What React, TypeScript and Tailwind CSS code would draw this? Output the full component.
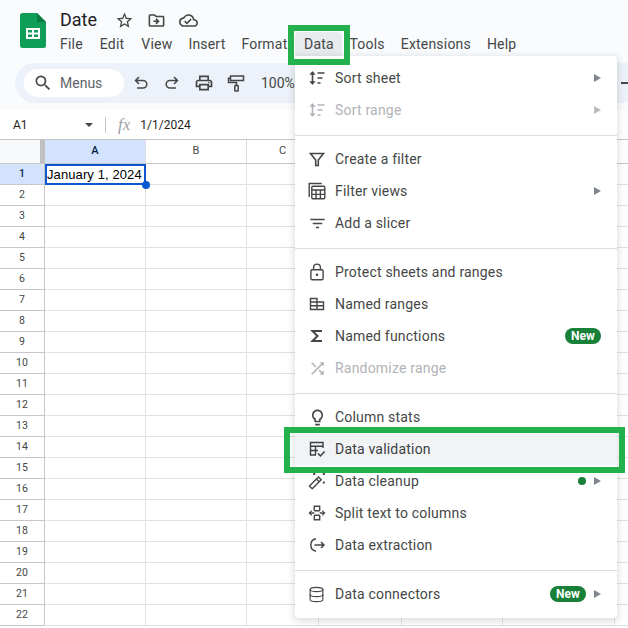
import type { ReactNode } from "react";
import { Database } from "lucide-react";
import {
  MdFilterList,
  MdOutlineCloudDone,
  MdOutlineDriveFileMove,
  MdOutlineLightbulb,
  MdOutlinePrint,
  MdSearch,
  MdShuffle,
  MdStarBorder,
} from "react-icons/md";

const menuBar = [
  { name: "File", gap: "mr-[17px]" },
  { name: "Edit", gap: "mr-[17px]" },
  { name: "View", gap: "mr-[16px]" },
  { name: "Insert", gap: "mr-[16px]" },
  { name: "Format", gap: "mr-[8px]" },
];
// D onward sit behind the open menu, so their letters never show
const columns = [
  { id: "a", name: "A", width: "w-[101px]" },
  { id: "b", name: "B", width: "w-[101px]" },
  { id: "c", name: "C", width: "w-[72px]" },
  { id: "d", name: "", width: "w-[83px]" },
  { id: "e", name: "", width: "w-[101px]" },
  { id: "f", name: "", width: "w-[112px]" },
  { id: "g", name: "", width: "w-[60px]" },
];
const rows = Array.from({ length: 22 }, (_, i) => i + 1);

const SortIcon = () => (
  <svg viewBox="0 0 18 18" className="h-[18px] w-[18px]" fill="none" stroke="currentColor">
    <path d="M4.5 3v12" strokeWidth="1.6" />
    <path d="M1.8 5.5 4.5 2.4l2.7 3.1zM1.8 12.5l2.7 3.1 2.7-3.1z" fill="currentColor" strokeWidth="0.5" />
    <path d="M9.5 4h7M9.5 9h5M9.5 14h3" strokeWidth="1.6" />
  </svg>
);
const FilterIcon = () => (
  <svg viewBox="0 0 18 18" className="h-[18px] w-[18px]" fill="none" stroke="currentColor" strokeWidth="1.6">
    <path d="M2.5 3.5h13L10.3 10v5.5H7.7V10z" />
  </svg>
);
const FilterViewsIcon = () => (
  <svg viewBox="0 0 18 18" className="h-[18px] w-[18px]" fill="none" stroke="currentColor" strokeWidth="1.4">
    <path d="M1.2 15V1.5h12.5" />
    <rect x="3.8" y="4.2" width="13" height="12.6" rx="1" />
    <path d="M3.8 8h13M3.8 12.4h13M8 8v8.8M12.4 8v8.8" />
  </svg>
);
const LockIcon = () => (
  <svg viewBox="0 0 18 18" className="h-[18px] w-[18px]" fill="none" stroke="currentColor" strokeWidth="1.4">
    <rect x="2.900" y="6.700" width="12.200" height="10" rx="1.200" />
    <path d="M5.600 6.700V4.500a3.400 3.400 0 0 1 6.800 0v2.200" />
    <circle cx="9" cy="11.700" r="1.300" fill="currentColor" stroke="none" />
  </svg>
);
const NamedRangesIcon = () => (
  <svg viewBox="0 0 18 18" className="h-[18px] w-[18px]" fill="none" stroke="currentColor" strokeWidth="1.4">
    <path d="M2.500 3.500h6.500v3.500h6.500v7.500h-13zM2.500 7h13M2.500 10.700h13M9 3.500v11" />
  </svg>
);
const SigmaIcon = () => (
  <svg viewBox="0 0 18 18" className="h-[18px] w-[18px]" fill="none" stroke="currentColor" strokeWidth="2">
    <path d="M14 4H4.500L9.500 9l-5 5H14" />
  </svg>
);
const ValidationIcon = () => (
  <svg viewBox="0 0 18 18" className="h-[18px] w-[18px]" fill="none" stroke="currentColor" strokeWidth="1.4">
    <path d="M8 15H2.500V2.500h12.500V8M2.500 6.300H15M2.500 10.500H10M7.500 6.300V15" />
    <path d="m10 13.500 2.400 2.400 4.200-4.400" strokeWidth="1.500" />
  </svg>
);
const CleanupIcon = () => (
  <svg viewBox="0 0 18 18" className="h-[18px] w-[18px]" fill="none" stroke="currentColor" strokeWidth="1.4">
    <path d="m1.500 14 9-9 2.700 2.700-9 9z" />
    <path d="m8.400 7.100 2.700 2.700" />
    <path d="M5.200 1h2v2h-2zM14.800 1h2v2h-2zM14.800 9.500h2v2h-2z" fill="currentColor" stroke="none" />
  </svg>
);
const SplitIcon = () => (
  <svg viewBox="0 0 18 18" className="h-[18px] w-[18px]" fill="none" stroke="currentColor" strokeWidth="1.4">
    <path d="M6.300 6.700V2.200h5.400v4.500M6.300 11.300v4.500h5.400v-4.500M6.300 6.700h5.400M6.300 11.300h5.400M4 9h2.300M11.700 9H14" />
    <path d="M.5 9l3.200-3v6zM17.500 9l-3.200-3v6z" fill="currentColor" stroke="none" />
  </svg>
);
const ExtractIcon = () => (
  <svg viewBox="0 0 18 18" className="h-[18px] w-[18px]" fill="none" stroke="currentColor" strokeWidth="1.5">
    <path d="M8 2.800a6.300 6.300 0 0 0 0 12.400" />
    <path d="M6.500 9h9.500M13 6l3 3-3 3" />
  </svg>
);
const UndoIcon = () => (
  <svg viewBox="0 0 18 18" className="h-[18px] w-[18px]" fill="none" stroke="currentColor" strokeWidth="1.5">
    <path d="M7 3 3.500 6.500 7 10M3.500 6.500H11a3.800 3.800 0 0 1 0 7.600H5" />
  </svg>
);
const RedoIcon = () => (
  <svg viewBox="0 0 18 18" className="h-[18px] w-[18px]" fill="none" stroke="currentColor" strokeWidth="1.5">
    <path d="m11 3 3.500 3.500L11 10M14.500 6.500H7a3.800 3.800 0 0 0 0 7.600h6" />
  </svg>
);
const RollerIcon = () => (
  <svg viewBox="0 0 18 18" className="h-[18px] w-[18px]" fill="none" stroke="currentColor" strokeWidth="1.5">
    <path d="M3.500 2h13v4.500h-13zM3.500 4.200H1.500v4.300H9.500v3" />
    <rect x="7.800" y="11.500" width="3.400" height="5.500" rx="0.500" />
  </svg>
);

type Item = {
  label: string;
  icon: ReactNode;
  disabled?: boolean;
  arrow?: boolean;
  isNew?: boolean;
  dot?: boolean;
  active?: boolean;
};

const sections: Item[][] = [
  [
    { label: "Sort sheet", icon: <SortIcon />, arrow: true },
    { label: "Sort range", icon: <SortIcon />, arrow: true, disabled: true },
  ],
  [
    { label: "Create a filter", icon: <FilterIcon /> },
    { label: "Filter views", icon: <FilterViewsIcon />, arrow: true },
    { label: "Add a slicer", icon: <MdFilterList className="h-[19px] w-[19px]" /> },
  ],
  [
    { label: "Protect sheets and ranges", icon: <LockIcon /> },
    { label: "Named ranges", icon: <NamedRangesIcon /> },
    { label: "Named functions", icon: <SigmaIcon />, isNew: true },
    { label: "Randomize range", icon: <MdShuffle className="h-[19px] w-[19px]" />, disabled: true },
  ],
  [
    { label: "Column stats", icon: <MdOutlineLightbulb className="h-[19px] w-[19px]" /> },
    { label: "Data validation", icon: <ValidationIcon />, active: true },
    { label: "Data cleanup", icon: <CleanupIcon />, dot: true, arrow: true },
    { label: "Split text to columns", icon: <SplitIcon /> },
    { label: "Data extraction", icon: <ExtractIcon /> },
  ],
  [{ label: "Data connectors", icon: <Database className="h-[17px] w-[17px]" strokeWidth={1.6} />, isNew: true, arrow: true }],
];

const NewBadge = () => (
  <span className="flex h-[16px] w-[36px] items-center justify-center rounded-full bg-[#188038] text-[12px] font-bold text-white">
    New
  </span>
);

const MenuRow = ({ item }: { item: Item }) => (
  <div
    className={`flex h-[32px] items-center pl-[13px] pr-[16px] ${item.active ? "bg-[#f1f3f4]" : ""} ${
      item.disabled ? "text-[#b1b4b8]" : item.active ? "text-[#3c4043]" : "text-[#444746]"
    }`}
  >
    <span className="flex w-[27px] shrink-0 items-center justify-start">{item.icon}</span>
    <span className="tracking-[0.2px]">{item.label}</span>
    <span className="ml-auto flex items-center gap-[8px]">
      {item.isNew && <NewBadge />}
      {item.dot && <span className="h-[8px] w-[8px] rounded-full bg-[#188038]" />}
      {item.arrow && (
        <span
          className={`h-0 w-0 border-y-[4px] border-l-[7px] border-y-transparent ${
            item.disabled ? "border-l-[#b9bcbf]" : "border-l-[#80868b]"
          }`}
        />
      )}
    </span>
  </div>
);

const SheetGrid = () => (
  <div className="text-[#444746]">
    <div className="flex h-[25px] border-y border-[#c7c7c7]">
      <div className="w-[45px] shrink-0 border-r-[5px] border-[#c0c0c0] bg-[#f8f9fa]" />
      {columns.map((col, i) => (
        <div
          key={col.id}
          className={`${col.width} flex shrink-0 items-center justify-center border-r border-[#dadce0] text-[11px] ${
            i === 0 ? "bg-[#d3e3fd] font-medium text-[#041e49]" : ""
          }`}
        >
          {col.name}
        </div>
      ))}
    </div>
    {rows.map((row) => (
      <div key={row} className="flex h-[21px]">
        <div
          className={`flex w-[45px] shrink-0 items-center justify-center border-r border-b border-[#c7c7c7] text-[10.5px] ${
            row === 1 ? "bg-[#d3e3fd] font-medium text-[#041e49]" : ""
          }`}
        >
          {row}
        </div>
        {columns.map((col) => (
          <div key={col.id} className={`${col.width} shrink-0 border-r border-b border-[#e1e1e1]`} />
        ))}
      </div>
    ))}
  </div>
);

export default function App() {
  return (
    <div className="relative h-[628px] w-[628px] overflow-hidden bg-white font-['Roboto',sans-serif] text-[14px] text-[#444746]">
      {/* Title and menu bar */}
      <div className="h-[110px] bg-[#f9fbfd] px-[15px]">
        <div className="flex h-[63px]">
          <svg viewBox="0 0 26 35" className="ml-[5px] mt-[13px] h-[35px] w-[26px]">
            <path d="M2.500 0H17l9 9v23.500a2.500 2.500 0 0 1-2.500 2.500h-21A2.500 2.500 0 0 1 0 32.500v-30A2.500 2.500 0 0 1 2.500 0z" fill="#0f9d58" />
            <path d="M17 0v9h9z" fill="#0a7a43" />
            <path d="M6 15h14v11H6zM8 17v2.500h4V17zm6 0v2.500h4V17zm-6 4.500V24h4v-2.500zm6 0V24h4v-2.500z" fill="#fff" fillRule="evenodd" />
          </svg>
          <div className="ml-[14px]">
            <div className="mt-[8px] flex h-[24px] items-center">
              <span className="text-[18px] leading-[24px] text-[#1f1f1f]">Date</span>
              <span className="ml-[18px] flex items-center gap-[13px] text-[#444746]">
                <MdStarBorder className="h-[19px] w-[19px]" />
                <MdOutlineDriveFileMove className="h-[19px] w-[19px]" />
                <MdOutlineCloudDone className="h-[19px] w-[19px]" />
              </span>
            </div>
            <div className="flex h-[24px] items-center text-[14px] tracking-[0.2px] text-[#444746]">
              {menuBar.map((item) => (
                <span key={item.name} className={item.gap}>
                  {item.name}
                </span>
              ))}
              <span className="flex h-[24px] w-[47px] items-center justify-center rounded-t-[4px] bg-[#e8eaed]">Data</span>
              <span className="ml-[7px] mr-[16px]">Tools</span>
              <span className="mr-[16px]">Extensions</span>
              <span>Help</span>
            </div>
          </div>
        </div>
        {/* Toolbar */}
        <div className="-mr-[15px] flex h-[40px] items-center rounded-l-full bg-[#edf2fa] pl-[9px] text-[#444746]">
          <div className="flex h-[28px] w-[100px] items-center rounded-full bg-white pl-[9px] text-[#5f6368]">
            <MdSearch className="h-[20px] w-[20px] text-[#444746]" />
            <span className="ml-[7px] text-[14px]">Menus</span>
          </div>
          <span className="ml-[8px] flex items-center gap-[13px]">
            <UndoIcon />
            <RedoIcon />
            <MdOutlinePrint className="h-[20px] w-[20px]" />
            <RollerIcon />
          </span>
          <span className="ml-[16px] text-[14px]">100%</span>
          <span className="ml-auto h-[2px] w-[7px] bg-[#444746]" />
        </div>
      </div>

      {/* Formula bar */}
      <div className="flex h-[29px] items-center text-[12px]">
        <span className="ml-[13px] w-[72px] text-[#1f1f1f]">A1</span>
        <span className="h-0 w-0 border-x-[4px] border-t-[4px] border-x-transparent border-t-[#444746]" />
        <span className="ml-[12px] h-[16px] w-px bg-[#c7c7c7]" />
        <span className="ml-[12px] font-['Liberation_Serif',serif] text-[17px] italic text-[#9aa0a6]">fx</span>
        <span className="ml-[10px] text-[12px] text-[#1f1f1f]">1/1/2024</span>
      </div>

      <SheetGrid />

      {/* Active cell */}
      <div className="absolute left-[45px] top-[164px] flex h-[21px] w-[101px] items-center whitespace-nowrap border-2 border-[#0b57d0] bg-white font-['Liberation_Sans',sans-serif] text-[13px] tracking-[0.1px] text-black">
        January 1, 2024
      </div>
      <div className="absolute left-[142px] top-[181px] h-[8px] w-[8px] rounded-full bg-[#0b57d0]" />

      {/* Data menu */}
      <div className="absolute left-[295px] top-[56px] w-[322px] rounded-[4px] bg-white pb-[8px] pt-[6px] shadow-[0_2px_6px_2px_rgba(60,64,67,0.15)]">
        {sections.map((section, i) => (
          <div key={i}>
            {i > 0 && <div className="mb-[7px] mt-[9px] h-px bg-[#dadce0]" />}
            {section.map((item) => (
              <MenuRow key={item.label} item={item} />
            ))}
          </div>
        ))}
      </div>

      {/* Callout frames */}
      <div className="absolute left-[288px] top-[25px] h-[40px] w-[62px] border-[6px] border-[#22b14c]" />
      <div className="absolute left-[284px] top-[427px] h-[46px] w-[341px] border-[6px] border-[#22b14c]" />
    </div>
  );
}
